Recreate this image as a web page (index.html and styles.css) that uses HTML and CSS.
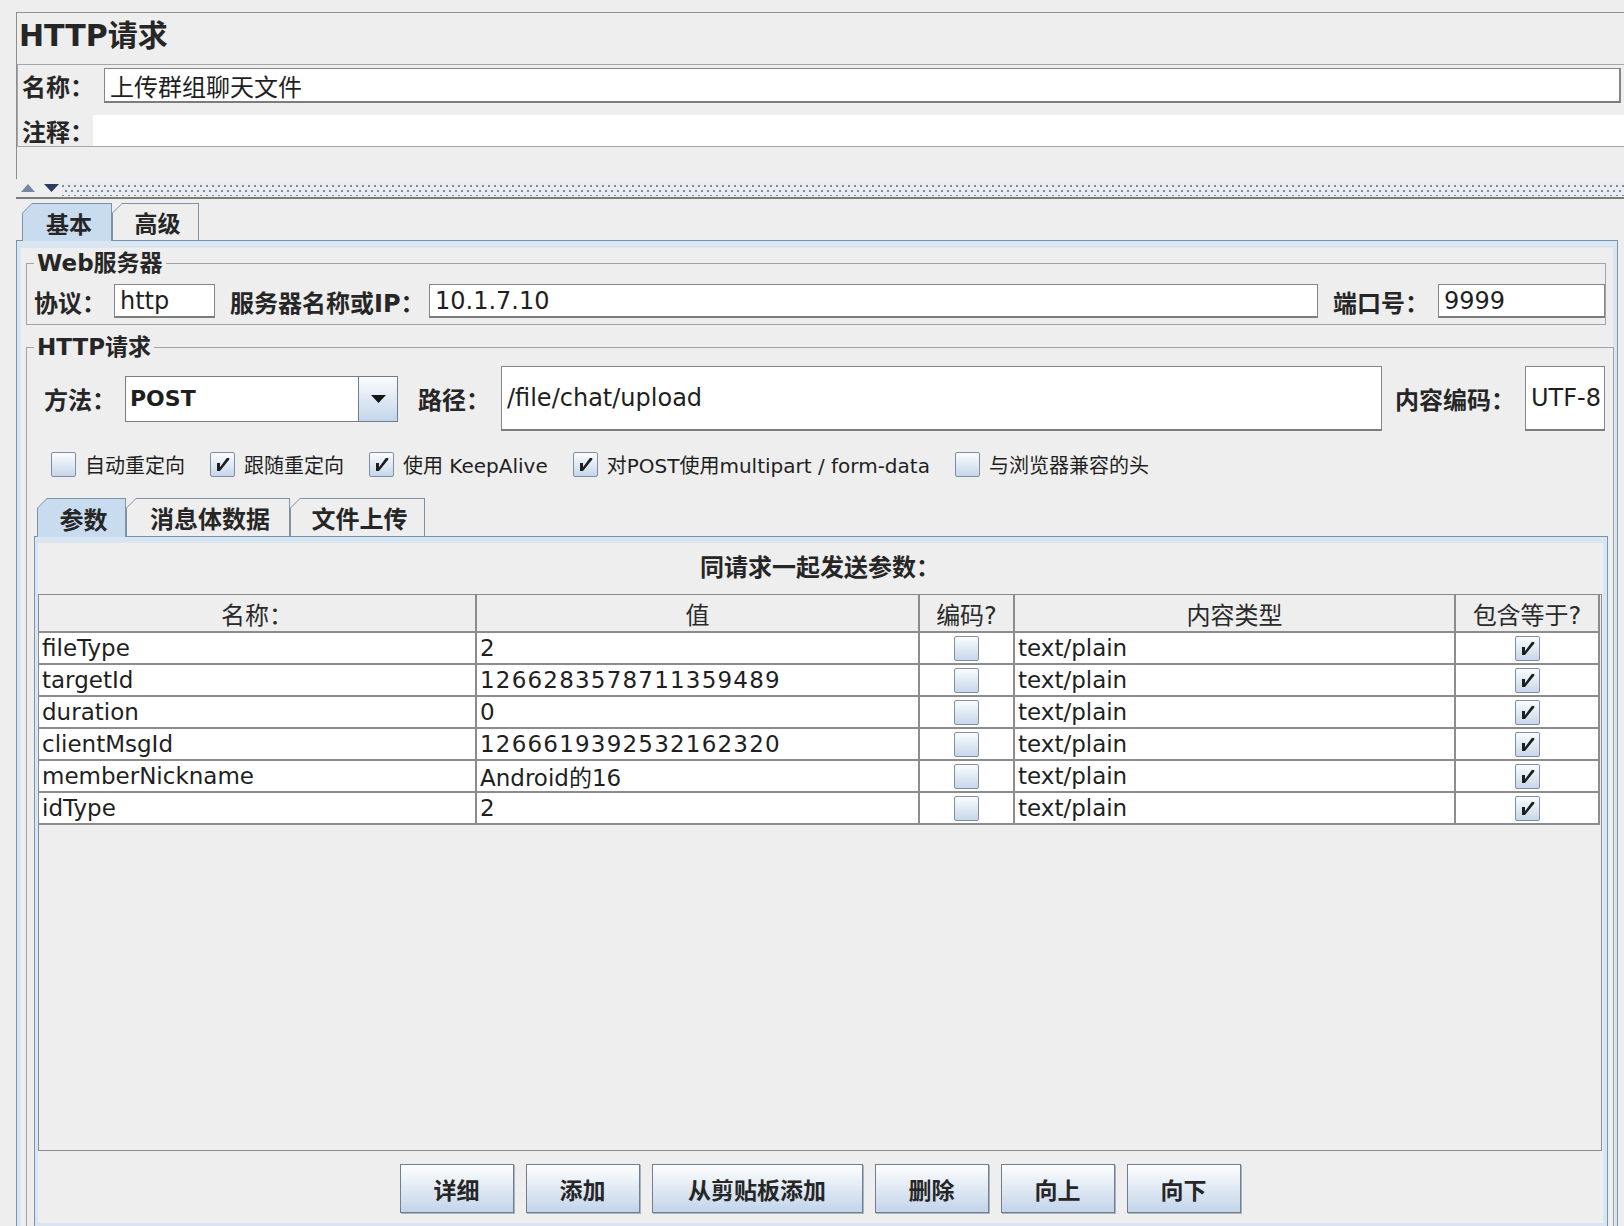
FILE: index.html
```html
<!DOCTYPE html>
<html lang="zh-CN">
<head>
<meta charset="utf-8">
<title>HTTP请求</title>
<link rel="stylesheet" href="styles.css">
</head>
<body>
<div class="screen">
  <div class="top-panel">
    <div class="title">HTTP请求</div>
    <div class="name-box">
      <div class="name-row">
        <span class="lbl lbl-name">名称：</span>
        <div class="field name-field">上传群组聊天文件</div>
      </div>
      <div class="comment-row">
        <span class="lbl lbl-comment">注释：</span>
        <div class="comment-field"></div>
      </div>
    </div>
  </div>

  <div class="splitter">
    <svg class="arrow-up" width="14" height="8" viewBox="0 0 14 8"><polygon points="0,8 7,0 14,8" fill="#7488a6"/></svg>
    <svg class="arrow-down" width="15" height="8" viewBox="0 0 15 8"><polygon points="0,0 15,0 7.5,8" fill="#2c3d62"/></svg>
    <div class="dots"></div>
  </div>

  <div class="main-tabs">
    <div class="tabstrip main-strip">
      <div class="tab selected t-basic"><span>基本</span></div>
      <div class="tab t-adv"><span>高级</span></div>
    </div>
    <div class="main-body">
      <fieldset class="group web-group">
        <legend>Web服务器</legend>
        <div class="web-row">
          <span class="lbl w-proto">协议：</span>
          <div class="field f-proto">http</div>
          <span class="lbl w-server">服务器名称或IP：</span>
          <div class="field f-server">10.1.7.10</div>
          <span class="lbl w-port">端口号：</span>
          <div class="field f-port">9999</div>
        </div>
      </fieldset>

      <fieldset class="group http-group">
        <legend>HTTP请求</legend>
        <div class="method-row">
          <span class="lbl w-method">方法：</span>
          <div class="combo">
            <div class="combo-field">POST</div>
            <div class="combo-btn"><svg width="15" height="8" viewBox="0 0 15 8"><polygon points="0,0 15,0 7.5,8" fill="#151515"/></svg></div>
          </div>
          <span class="lbl w-path">路径：</span>
          <div class="field f-path">/file/chat/upload</div>
          <span class="lbl w-enc">内容编码：</span>
          <div class="field f-enc">UTF-8</div>
        </div>

        <div class="checks">
          <div class="chk-item"><span class="chk"></span><span class="chk-label">自动重定向</span></div>
          <div class="chk-item"><span class="chk"><svg width="23" height="23" viewBox="0 0 23 23"><path d="M6 10h3v4.2L15.8 5H18.3v1.6L9 18H6z" fill="#1e1e1e"/></svg></span><span class="chk-label">跟随重定向</span></div>
          <div class="chk-item"><span class="chk"><svg width="23" height="23" viewBox="0 0 23 23"><path d="M6 10h3v4.2L15.8 5H18.3v1.6L9 18H6z" fill="#1e1e1e"/></svg></span><span class="chk-label">使用 KeepAlive</span></div>
          <div class="chk-item"><span class="chk"><svg width="23" height="23" viewBox="0 0 23 23"><path d="M6 10h3v4.2L15.8 5H18.3v1.6L9 18H6z" fill="#1e1e1e"/></svg></span><span class="chk-label">对POST使用multipart / form-data</span></div>
          <div class="chk-item"><span class="chk"></span><span class="chk-label">与浏览器兼容的头</span></div>
        </div>

        <div class="tabstrip inner-strip">
          <div class="tab selected t-params"><span>参数</span></div>
          <div class="tab t-body"><span>消息体数据</span></div>
          <div class="tab t-files"><span>文件上传</span></div>
        </div>
        <div class="inner-body">
          <div class="params-title">同请求一起发送参数：</div>
          <div class="scroll">
            <div class="params">
              <div class="th">名称：</div><div class="th">值</div><div class="th">编码?</div><div class="th">内容类型</div><div class="th">包含等于?</div>

              <div class="td">fileType</div><div class="td">2</div><div class="td c"><span class="chk sm"></span></div><div class="td">text/plain</div><div class="td c"><span class="chk sm"><svg width="23" height="23" viewBox="0 0 23 23"><path d="M6 10h3v4.2L15.8 5H18.3v1.6L9 18H6z" fill="#1e1e1e"/></svg></span></div>

              <div class="td">targetId</div><div class="td num">1266283578711359489</div><div class="td c"><span class="chk sm"></span></div><div class="td">text/plain</div><div class="td c"><span class="chk sm"><svg width="23" height="23" viewBox="0 0 23 23"><path d="M6 10h3v4.2L15.8 5H18.3v1.6L9 18H6z" fill="#1e1e1e"/></svg></span></div>

              <div class="td">duration</div><div class="td">0</div><div class="td c"><span class="chk sm"></span></div><div class="td">text/plain</div><div class="td c"><span class="chk sm"><svg width="23" height="23" viewBox="0 0 23 23"><path d="M6 10h3v4.2L15.8 5H18.3v1.6L9 18H6z" fill="#1e1e1e"/></svg></span></div>

              <div class="td">clientMsgId</div><div class="td num">1266619392532162320</div><div class="td c"><span class="chk sm"></span></div><div class="td">text/plain</div><div class="td c"><span class="chk sm"><svg width="23" height="23" viewBox="0 0 23 23"><path d="M6 10h3v4.2L15.8 5H18.3v1.6L9 18H6z" fill="#1e1e1e"/></svg></span></div>

              <div class="td">memberNickname</div><div class="td">Android的16</div><div class="td c"><span class="chk sm"></span></div><div class="td">text/plain</div><div class="td c"><span class="chk sm"><svg width="23" height="23" viewBox="0 0 23 23"><path d="M6 10h3v4.2L15.8 5H18.3v1.6L9 18H6z" fill="#1e1e1e"/></svg></span></div>

              <div class="td">idType</div><div class="td">2</div><div class="td c"><span class="chk sm"></span></div><div class="td">text/plain</div><div class="td c"><span class="chk sm"><svg width="23" height="23" viewBox="0 0 23 23"><path d="M6 10h3v4.2L15.8 5H18.3v1.6L9 18H6z" fill="#1e1e1e"/></svg></span></div>
            </div>
          </div>
          <div class="buttons">
            <div class="btn">详细</div>
            <div class="btn">添加</div>
            <div class="btn wide">从剪贴板添加</div>
            <div class="btn">删除</div>
            <div class="btn">向上</div>
            <div class="btn">向下</div>
          </div>
        </div>
      </fieldset>
    </div>
  </div>
</div>
</body>
</html>
```

FILE: styles.css
```css
* { box-sizing: border-box; }
html, body { margin: 0; padding: 0; }
body {
  background: #eeeeee;
  font-family: "DejaVu Sans", "Noto Sans CJK SC", sans-serif;
  color: #1f1f1f;
}
.screen {
  width: 1624px;
  height: 1226px;
  overflow: hidden;
  background: #eeeeee;
  padding-top: 12px;
}

/* ---------- top panel ---------- */
.top-panel {
  margin-left: 16px;
  height: 167px;
  border-top: 1px solid #8e8e8e;
  border-left: 1px solid #8e8e8e;
}
.title {
  height: 51px;
  line-height: 46px;
  font-size: 30px;
  font-weight: bold;
  padding-left: 2px;
  color: #262626;
}
.name-box {
  border-top: 1px solid #a6a6a6;
  border-left: 1px solid #a6a6a6;
  border-bottom: 1px solid #a6a6a6;
}
.lbl {
  font-size: 24px;
  font-weight: bold;
  white-space: nowrap;
  flex: none;
  color: #262626;
}
.name-row {
  display: flex;
  align-items: center;
  height: 38px;
  padding-top: 3px;
}
.lbl-name { width: 86px; padding-left: 4px; }
.field {
  background: #ffffff;
  border: 1px solid #858585;
  border-bottom: 2px solid #7c7c7c;
  display: flex;
  align-items: center;
  padding-left: 5px;
  font-size: 24px;
  white-space: nowrap;
  overflow: hidden;
  flex: none;
}
.name-field {
  flex: 1;
  height: 35px;
  margin-right: 3px;
  border-right-width: 2px;
}
.comment-row {
  display: flex;
  align-items: center;
  height: 31px;
  margin-top: 12px;
}
.lbl-comment { width: 75px; padding-left: 4px; }
.comment-field {
  flex: 1;
  height: 31px;
  background: #ffffff;
}

/* ---------- splitter ---------- */
.splitter {
  margin-left: 16px;
  height: 20px;
  display: flex;
  align-items: flex-start;
  padding-top: 4px;
  border-bottom: 2px solid #7b7b7b;
}
.arrow-up { margin-left: 5px; margin-top: 1px; flex: none; }
.arrow-down { margin-left: 9px; margin-top: 1px; flex: none; }
.dots {
  flex: 1;
  height: 13px;
  margin-left: 3px;
  background-color: #e9edf2;
  background-image:
    radial-gradient(circle at 1px 1px, #7f8b99 0.9px, transparent 1.4px),
    radial-gradient(circle at 1px 1px, #7f8b99 0.9px, transparent 1.4px);
  background-size: 6px 10px, 6px 10px;
  background-position: 0 2px, 3px 7px;
}

/* ---------- tabs ---------- */
.main-tabs {
  margin-left: 16px;
  width: 1602px;
  margin-top: 4px;
}
.tabstrip {
  display: flex;
  align-items: flex-end;
}
.main-strip { height: 37px; padding-left: 6px; }
.tab {
  background: #8092a6;
  clip-path: polygon(0 10px, 10px 0, 100% 0, 100% 100%, 0 100%);
  padding: 1px 1px 0 1px;
  flex: none;
}
.tab > span {
  display: flex;
  height: 100%;
  align-items: center;
  justify-content: center;
  background: #eeeeee;
  clip-path: polygon(0 9px, 9px 0, 100% 0, 100% 100%, 0 100%);
  font-weight: bold;
  font-size: 24px;
  color: #262626;
  padding-left: 4px;
}
.tab.selected {
  position: relative;
  z-index: 1;
  margin-bottom: -1px;
}
.tab.selected > span { background: #c8dbef; }

.main-strip .tab { height: 37px; }
.main-strip .tab.selected { height: 38px; }
.main-strip .tab > span { font-size: 23px; }
.t-basic { width: 90px; }
.t-adv { width: 87px; }

.main-body {
  padding: 9px 4px 0 10px;
  box-shadow:
    inset 1px 0 0 #7c95ae,
    inset 0 1px 0 #7592ac,
    inset -1px 0 0 #7c95ae,
    inset 5px 0 0 #d9e5f1,
    inset 0 8px 0 #d9e5f1,
    inset -5px 0 0 #d9e5f1;
}

/* ---------- fieldsets ---------- */
.group {
  border: 1px solid #a3a3a3;
  margin: 0;
  min-width: 0;
}
.group legend {
  font-size: 23px;
  font-weight: bold;
  line-height: 28px;
  padding: 0 3px;
  color: #262626;
}
.web-group {
  padding: 7px 0 6px 7px;
  margin-right: 8px;
}
.web-row {
  display: flex;
  align-items: center;
  height: 34px;
}
.web-row .field { height: 34px; }
.w-proto { width: 80px; }
.f-proto { width: 101px; }
.w-server { width: 214px; padding-left: 15px; }
.f-server { flex: 1; }
.w-port { width: 120px; padding-left: 15px; }
.f-port { width: 167px; }

.http-group {
  margin-top: 8px;
  padding: 5px 5px 0 7px;
  border-bottom: none;
}
.method-row {
  display: flex;
  align-items: center;
  height: 65px;
  padding: 0 3px 0 10px;
}
.w-method { width: 81px; }
.combo {
  width: 273px;
  height: 46px;
  display: flex;
  flex: none;
}
.combo-field {
  flex: 1;
  background: #ffffff;
  border: 1px solid #7d7d7d;
  border-right: none;
  display: flex;
  align-items: center;
  padding-left: 4px;
  font-size: 22px;
  font-weight: bold;
}
.combo-btn {
  width: 40px;
  border: 1px solid #6e7e8f;
  background: linear-gradient(#fbfcfe, #c3d5ea);
  display: flex;
  align-items: center;
  justify-content: center;
}
.w-path { width: 103px; padding-left: 20px; }
.f-path { flex: 1; height: 65px; }
.w-enc { width: 143px; padding-left: 13px; }
.f-enc { width: 80px; height: 65px; }

/* ---------- checkboxes ---------- */
.checks {
  display: flex;
  align-items: center;
  height: 34px;
  margin-top: 16px;
  padding-left: 17px;
}
.chk-item {
  display: flex;
  align-items: center;
  margin-right: 25px;
}
.chk {
  width: 25px;
  height: 25px;
  border: 1px solid #7f8fa1;
  border-radius: 2px;
  background: linear-gradient(#fbfcfe, #c6d7ea);
  display: flex;
  align-items: center;
  justify-content: center;
  flex: none;
  margin-right: 9px;
}
.chk-label {
  font-size: 20px;
  white-space: nowrap;
}

/* ---------- inner tabs ---------- */
.inner-strip {
  height: 38px;
  margin-top: 17px;
  padding-left: 3px;
}
.inner-strip .tab { height: 38px; }
.inner-strip .tab.selected { height: 39px; }
.t-params { width: 89px; }
.t-body { width: 164px; }
.t-files { width: 135px; }

.inner-body {
  padding: 15px 6px 15px 4px;
  box-shadow:
    inset 1px 0 0 #7c95ae,
    inset 0 1px 0 #7592ac,
    inset -1px 0 0 #7c95ae,
    inset 4px 0 0 #d9e5f1,
    inset 0 7px 0 #d9e5f1,
    inset -5px 0 0 #d9e5f1,
    inset 0 -5px 0 #d9e5f1;
}
.params-title {
  text-align: center;
  font-size: 24px;
  font-weight: bold;
  line-height: 34px;
  margin-bottom: 9px;
  color: #262626;
}
.scroll {
  height: 557px;
  border: 1px solid #8d8d8d;
  background: #eeeeee;
}
.params {
  display: grid;
  grid-template-columns: 438px 443px 95px 441px 144px;
  width: 1561px;
}
.params > div {
  border-right: 2px solid #8c8c8c;
  border-bottom: 2px solid #8c8c8c;
  white-space: nowrap;
  overflow: hidden;
}
.th {
  height: 38px;
  background: #eeeeee;
  font-size: 24px;
  display: flex;
  align-items: center;
  justify-content: center;
  color: #2a2a2a;
}
.td {
  height: 32px;
  background: #ffffff;
  font-size: 23px;
  padding-left: 3px;
  display: flex;
  align-items: center;
}
.td.num { letter-spacing: 1.2px; }
.td.c { justify-content: center; padding-left: 0; }
.chk.sm { margin-right: 0; }

/* ---------- buttons ---------- */
.buttons {
  display: flex;
  justify-content: center;
  gap: 12px;
  margin-top: 13px;
}
.btn {
  width: 114px;
  height: 49px;
  border: 1px solid #6f7f90;
  background: linear-gradient(#fefefe, #c2d4e9);
  box-shadow: 1px 1px 0 #a9b4c0;
  display: flex;
  align-items: center;
  justify-content: center;
  font-size: 23px;
  font-weight: bold;
  color: #262626;
}
.btn.wide { width: 211px; }
```
